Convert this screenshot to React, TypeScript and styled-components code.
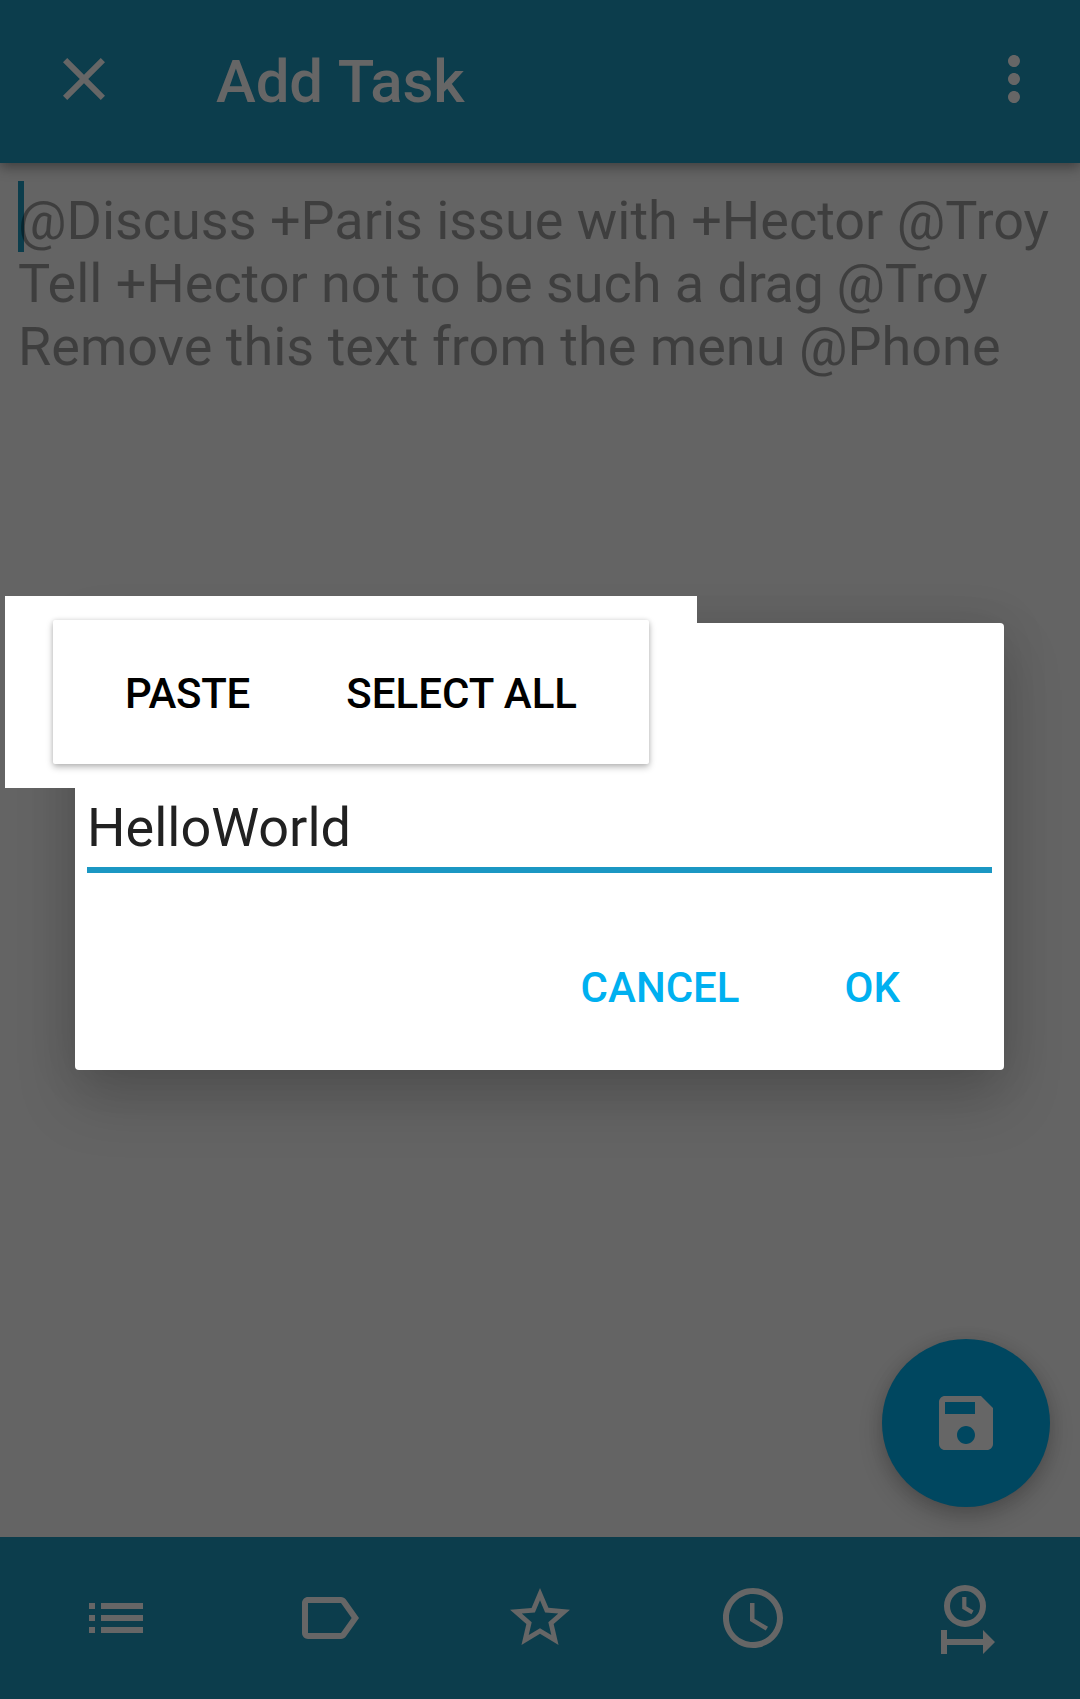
import React from "react";
import styled, { createGlobalStyle } from "styled-components";

const Global = createGlobalStyle`
  * { box-sizing: border-box; }
  body { margin: 0; background: #646464; }
  button { border: 0; padding: 0; background: none; color: inherit; font: inherit; }
`;

const Screen = styled.main`
  position: relative;
  display: flex;
  flex-direction: column;
  width: 1080px;
  height: 1699px;
  overflow: hidden;
  background: #646464;
  font-family: Roboto, "Noto Sans", sans-serif;
`;

const AppBar = styled.header`
  display: flex;
  align-items: flex-start;
  height: 163px;
  padding: 43px 30px 0 48px;
  color: #666;
  background: #0c3d4c;
  box-shadow: 0 4px 12px rgba(0, 0, 0, 0.38);
`;

const Title = styled.h1`
  flex: 1;
  margin: 3px 0 0 96px;
  font-size: 60px;
  font-weight: 500;
  line-height: 71px;
  letter-spacing: -0.15px;
  word-spacing: 1.5px;
`;

const IconButton = styled.button`
  display: flex;
  width: 72px;
  height: 72px;
`;

const Editor = styled.section`
  position: relative;
  flex: 1;
  padding: 26px 18px;
`;

const Cursor = styled.span`
  position: absolute;
  left: 18px;
  top: 18px;
  width: 6px;
  height: 71px;
  background: #0c3d4c;
`;

const Hint = styled.p`
  position: relative;
  margin: 0;
  color: rgba(0, 0, 0, 0.38);
  font-size: 54px;
  line-height: 63px;
  white-space: pre;
`;

const Run = styled.span<{ $tracking: number }>`
  letter-spacing: ${(p) => p.$tracking}px;
`;

const Fab = styled.button`
  position: absolute;
  right: 30px;
  bottom: 30px;
  display: grid;
  place-items: center;
  width: 168px;
  height: 168px;
  border-radius: 50%;
  color: #666;
  background: #004760;
  box-shadow: 0 10px 24px rgba(0, 0, 0, 0.2), 0 2px 16px rgba(0, 0, 0, 0.1);
`;

const BottomBar = styled.nav`
  display: grid;
  grid-template-columns: repeat(5, 1fr);
  align-items: center;
  height: 162px;
  padding: 0 9px 0 10px;
  color: #666;
  background: #0c3d4c;
`;

const BottomItem = styled.button<{ $nudge?: number }>`
  display: flex;
  justify-content: center;
  padding-left: ${(p) => (p.$nudge ?? 0) * 2}px;
`;

const Scrim = styled.div`
  position: absolute;
  inset: 0;
  display: flex;
  justify-content: center;
  align-items: flex-start;
  padding: 623px 76px 0 75px;
`;

const Dialog = styled.section`
  display: flex;
  flex-direction: column;
  width: 100%;
  height: 447px;
  padding: 173px 12px 0;
  border-radius: 4px;
  background: #fff;
  box-shadow: 0 30px 60px rgba(0, 0, 0, 0.17), 0 2px 48px rgba(0, 0, 0, 0.11);
`;

const Field = styled.div`
  height: 77px;
  border-bottom: 6px solid #1b97c3;
  color: #212121;
  font-size: 54px;
  line-height: 63px;
`;

const Actions = styled.footer`
  display: flex;
  justify-content: flex-end;
  gap: 105px;
  margin-top: 90px;
  padding-right: 92px;
  color: #00b0f0;
  font-size: 42px;
  font-weight: 500;
  line-height: 49px;
`;

const PopupWindow = styled.div`
  position: absolute;
  left: 5px;
  top: 596px;
  width: 692px;
  height: 192px;
  padding: 24px 48px;
  background: #fff;
`;

const SelectionBar = styled.div`
  display: flex;
  align-items: center;
  justify-content: space-between;
  height: 144px;
  padding: 2px 72px 0;
  border-radius: 2px;
  color: #000;
  font-size: 42px;
  font-weight: 500;
  line-height: 49px;
  box-shadow: 0 3px 7px rgba(0, 0, 0, 0.28), 0 0 4px rgba(0, 0, 0, 0.1);
`;

const SelectionAction = styled.button<{ $tracking?: number }>`
  letter-spacing: ${(p) => p.$tracking ?? 0}px;
`;

const Glyph = ({ d }: { d: string }) => (
  <svg width="72" height="72" viewBox="0 0 24 24" fill="currentColor">
    <path d={d} />
  </svg>
);

const icons = {
  close:
    "M19 6.41L17.59 5 12 10.59 6.41 5 5 6.41 10.59 12 5 17.59 6.41 19 12 13.41 17.59 19 19 17.59 13.41 12z",
  more: "M12 8c1.1 0 2-.9 2-2s-.9-2-2-2-2 .9-2 2 .9 2 2 2zm0 2c-1.1 0-2 .9-2 2s.9 2 2 2 2-.9 2-2-.9-2-2-2zm0 6c-1.1 0-2 .9-2 2s.9 2 2 2 2-.9 2-2-.9-2-2-2z",
  save: "M17 3H5c-1.11 0-2 .9-2 2v14c0 1.1.89 2 2 2h14c1.1 0 2-.9 2-2V7l-4-4zm-5 16c-1.66 0-3-1.34-3-3s1.34-3 3-3 3 1.34 3 3-1.34 3-3 3zm3-10H5V5h10v4z",
  list: "M3 13h2v-2H3v2zm0 4h2v-2H3v2zm0-8h2V7H3v2zm4 4h14v-2H7v2zm0 4h14v-2H7v2zM7 7v2h14V7H7z",
  label:
    "M17.63 5.84C17.27 5.33 16.67 5 16 5L5 5.01C3.9 5.01 3 5.9 3 7v10c0 1.1.9 1.99 2 1.99L16 19c.67 0 1.27-.33 1.63-.84L22 12l-4.37-6.16zM16 17H5V7h11l3.55 5L16 17z",
  star: "M22 9.24l-7.19-.62L12 2 9.19 8.63 2 9.24l5.46 4.73L5.82 21 12 17.27 18.18 21l-1.63-7.03L22 9.24zM12 15.4l-3.76 2.27 1-4.28-3.32-2.88 4.38-.38L12 6.1l1.71 4.04 4.38.38-3.32 2.88 1 4.28L12 15.4z",
  clock:
    "M11.99 2C6.47 2 2 6.48 2 12s4.47 10 9.99 10C17.52 22 22 17.52 22 12S17.52 2 11.99 2zM12 20c-4.42 0-8-3.58-8-8s3.58-8 8-8 8 3.58 8 8-3.58 8-8 8zm.5-13H11v6l5.25 3.15.75-1.23-4.5-2.67z",
};

const ThresholdGlyph = () => (
  <svg width="72" height="72" viewBox="0 0 72 72">
    <circle cx="36" cy="24" r="18" fill="none" stroke="currentColor" strokeWidth="6" />
    <path d="M35.3 15v10.6l8.2 4.8" fill="none" stroke="currentColor" strokeWidth="4.2" />
    <path
      fill="currentColor"
      d="M12 48h6v9h36v-9l12 12-12 12v-9H18v9h-6z"
    />
  </svg>
);

export default function App() {
  return (
    <>
      <Global />
      <Screen>
        <AppBar>
          <IconButton aria-label="Close">
            <Glyph d={icons.close} />
          </IconButton>
          <Title>Add Task</Title>
          <IconButton aria-label="More options">
            <Glyph d={icons.more} />
          </IconButton>
        </AppBar>
        <Editor>
          <Cursor />
          <Hint>
            <Run $tracking={-0.02}>{"@Discuss +Paris issue with +Hector @Troy\n"}</Run>
            <Run $tracking={-0.04}>{"Tell +Hector not to be such a "}</Run>
            <Run $tracking={-0.35}>{"drag @Troy\n"}</Run>
            <Run $tracking={0.03}>{"Remove this text from the menu @Phone"}</Run>
          </Hint>
          <Fab aria-label="Save">
            <Glyph d={icons.save} />
          </Fab>
        </Editor>
        <BottomBar>
          <BottomItem aria-label="List">
            <Glyph d={icons.list} />
          </BottomItem>
          <BottomItem aria-label="Tag" $nudge={1}>
            <Glyph d={icons.label} />
          </BottomItem>
          <BottomItem aria-label="Priority">
            <Glyph d={icons.star} />
          </BottomItem>
          <BottomItem aria-label="Due date">
            <Glyph d={icons.clock} />
          </BottomItem>
          <BottomItem aria-label="Threshold date">
            <ThresholdGlyph />
          </BottomItem>
        </BottomBar>
        <Scrim>
          <Dialog role="dialog">
            <Field>HelloWorld</Field>
            <Actions>
              <button>CANCEL</button>
              <button>OK</button>
            </Actions>
          </Dialog>
        </Scrim>
        <PopupWindow>
          <SelectionBar>
            <SelectionAction $tracking={-0.25}>PASTE</SelectionAction>
            <SelectionAction>SELECT ALL</SelectionAction>
          </SelectionBar>
        </PopupWindow>
      </Screen>
    </>
  );
}
